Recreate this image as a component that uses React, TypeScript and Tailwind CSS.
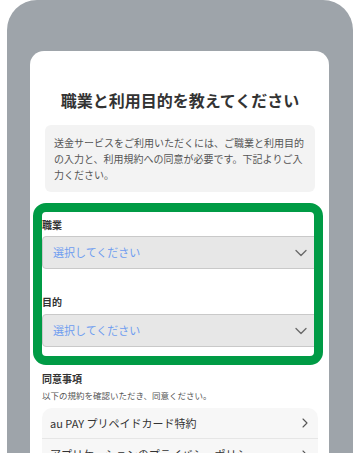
import { ChevronDown, ChevronRight } from "lucide-react";

const font = { fontFamily: '"Noto Sans CJK JP", "Noto Sans", sans-serif' };

const SelectBox = () => {
  return (
    <div className="flex items-center justify-between h-[33px] rounded-[4px] border border-[#c9c9c9] bg-[#e7e7e7] pl-[10px] pr-[6px]">
      <span className="text-[11px] leading-none text-[#6e9df0]">選択してください</span>
      <ChevronDown size={20} strokeWidth={1.6} className="text-[#6a6a6a]" />
    </div>
  );
};

const TermRow = ({ label, last }: { label: string; last?: boolean }) => {
  return (
    <div
      className={
        "flex items-center justify-between h-[31px] pl-[8px] pr-[5px] " +
        (last ? "" : "border-b border-[#e6e6e6]")
      }
    >
      <span className="text-[11px] leading-none text-[#333]">{label}</span>
      <ChevronRight size={16} strokeWidth={1.6} className="text-[#555]" />
    </div>
  );
};

export default function App() {
  return (
    <div className="w-[360px] h-[453px] overflow-hidden bg-white" style={font}>
      <div className="mx-[7px] h-full bg-[#9ea4aa] rounded-t-[30px] pt-[51px] pl-[23px] pr-[24px]">
        <div className="h-full bg-white rounded-t-[14px] pl-[12px] pr-[11px] pt-[37px]">
          <h1 className="text-center text-[16px] leading-[24px] font-bold text-[#333]">
            職業と利用目的を教えてください
          </h1>

          <div className="mt-[13px] mx-[3px] rounded-[6px] bg-[#f3f3f3] px-[9px] pt-[10px] pb-[9px]">
            <p className="text-[10px] leading-[16px] text-[#555]">
              送金サービスをご利用いただくには、ご職業と利用目的の入力と、利用規約への同意が必要です。下記よりご入力ください。
            </p>
          </div>

          <div className="relative mt-[26px]">
            <div className="text-[10px] leading-[14px] font-bold text-[#333]">職業</div>
            <div className="mt-[4px]">
              <SelectBox />
            </div>
            <div className="mt-[26px] text-[10px] leading-[14px] font-bold text-[#333]">目的</div>
            <div className="mt-[5px]">
              <SelectBox />
            </div>
            <div className="absolute -top-[15px] -bottom-[18px] -left-[9px] -right-[5px] rounded-[13px] border-[9px] border-[#009b45] pointer-events-none" />
          </div>

          <div className="mt-[25px] text-[10px] leading-[14px] font-bold text-[#333]">同意事項</div>
          <div className="mt-[3px] text-[8.5px] leading-[12px] text-[#555]">
            以下の規約を確認いただき、同意ください。
          </div>

          <div className="mt-[7px] rounded-[10px] bg-[#f7f7f7]">
            <TermRow label="au PAY プリペイドカード特約" />
            <TermRow label="アプリケーションのプライバシーポリシー" last />
          </div>
        </div>
      </div>
    </div>
  );
}
